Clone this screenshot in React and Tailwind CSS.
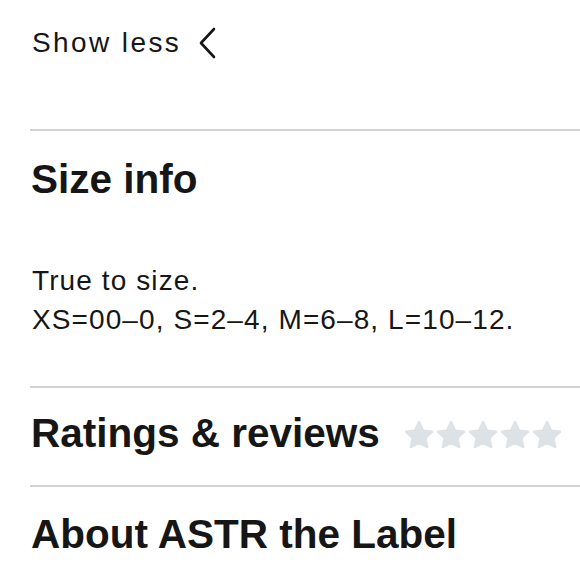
import React from "react";

function Star() {
  return (
    <svg width="28" height="27" viewBox="1.2 1 21.6 20.8" className="shrink-0">
      <path
        d="M12 1.8l3.1 6.5 7 .9-5.1 4.9 1.3 7-6.3-3.4-6.3 3.4 1.3-7L1.9 9.2l7-.9z"
        fill="#dce2e6"
        stroke="#dce2e6"
        strokeWidth="1.8"
        strokeLinejoin="round"
      />
    </svg>
  );
}

function Divider({ className = "" }) {
  return <div className={"h-[2px] bg-[#cfd3d6] " + className} />;
}

export default function App() {
  const sans = { fontFamily: '"Liberation Sans", Arial, sans-serif' };
  return (
    <div className="w-[580px] h-[580px] overflow-hidden bg-white pl-[30px] text-[#161616]" style={sans}>
      <div className="pt-[23px] pl-[2px] flex items-center h-[63px]">
        <span className="text-[28px] leading-[40px] tracking-[2.4px]">Show less</span>
        <svg width="18" height="32" viewBox="0 0 18 32" className="ml-[18px]">
          <polyline points="15,2 2,16 15,30" fill="none" stroke="#161616" strokeWidth="2.6" strokeLinecap="round" strokeLinejoin="round" />
        </svg>
      </div>
      <Divider className="mt-[66px]" />
      <h2 className="mt-[24px] pl-[1px] text-[40.5px] leading-[48px] font-bold">Size info</h2>
      <div className="mt-[58px] pl-[2px] text-[28px] leading-[39px] tracking-[1.1px]">
        <p>True to size.</p>
        <p>XS=00–0, S=2–4, M=6–8, L=10–12.</p>
      </div>
      <Divider className="mt-[47px]" />
      <div className="mt-[21px] pl-[1px] flex items-center">
        <h2 className="text-[40.5px] leading-[48px] font-bold">Ratings &amp; reviews</h2>
        <div className="ml-[25px] mt-[3px] flex gap-[4px]">
          <Star />
          <Star />
          <Star />
          <Star />
          <Star />
        </div>
      </div>
      <Divider className="mt-[28px]" />
      <h2 className="mt-[23px] pl-[1px] text-[40.5px] leading-[48px] font-bold">About ASTR the Label</h2>
    </div>
  );
}
